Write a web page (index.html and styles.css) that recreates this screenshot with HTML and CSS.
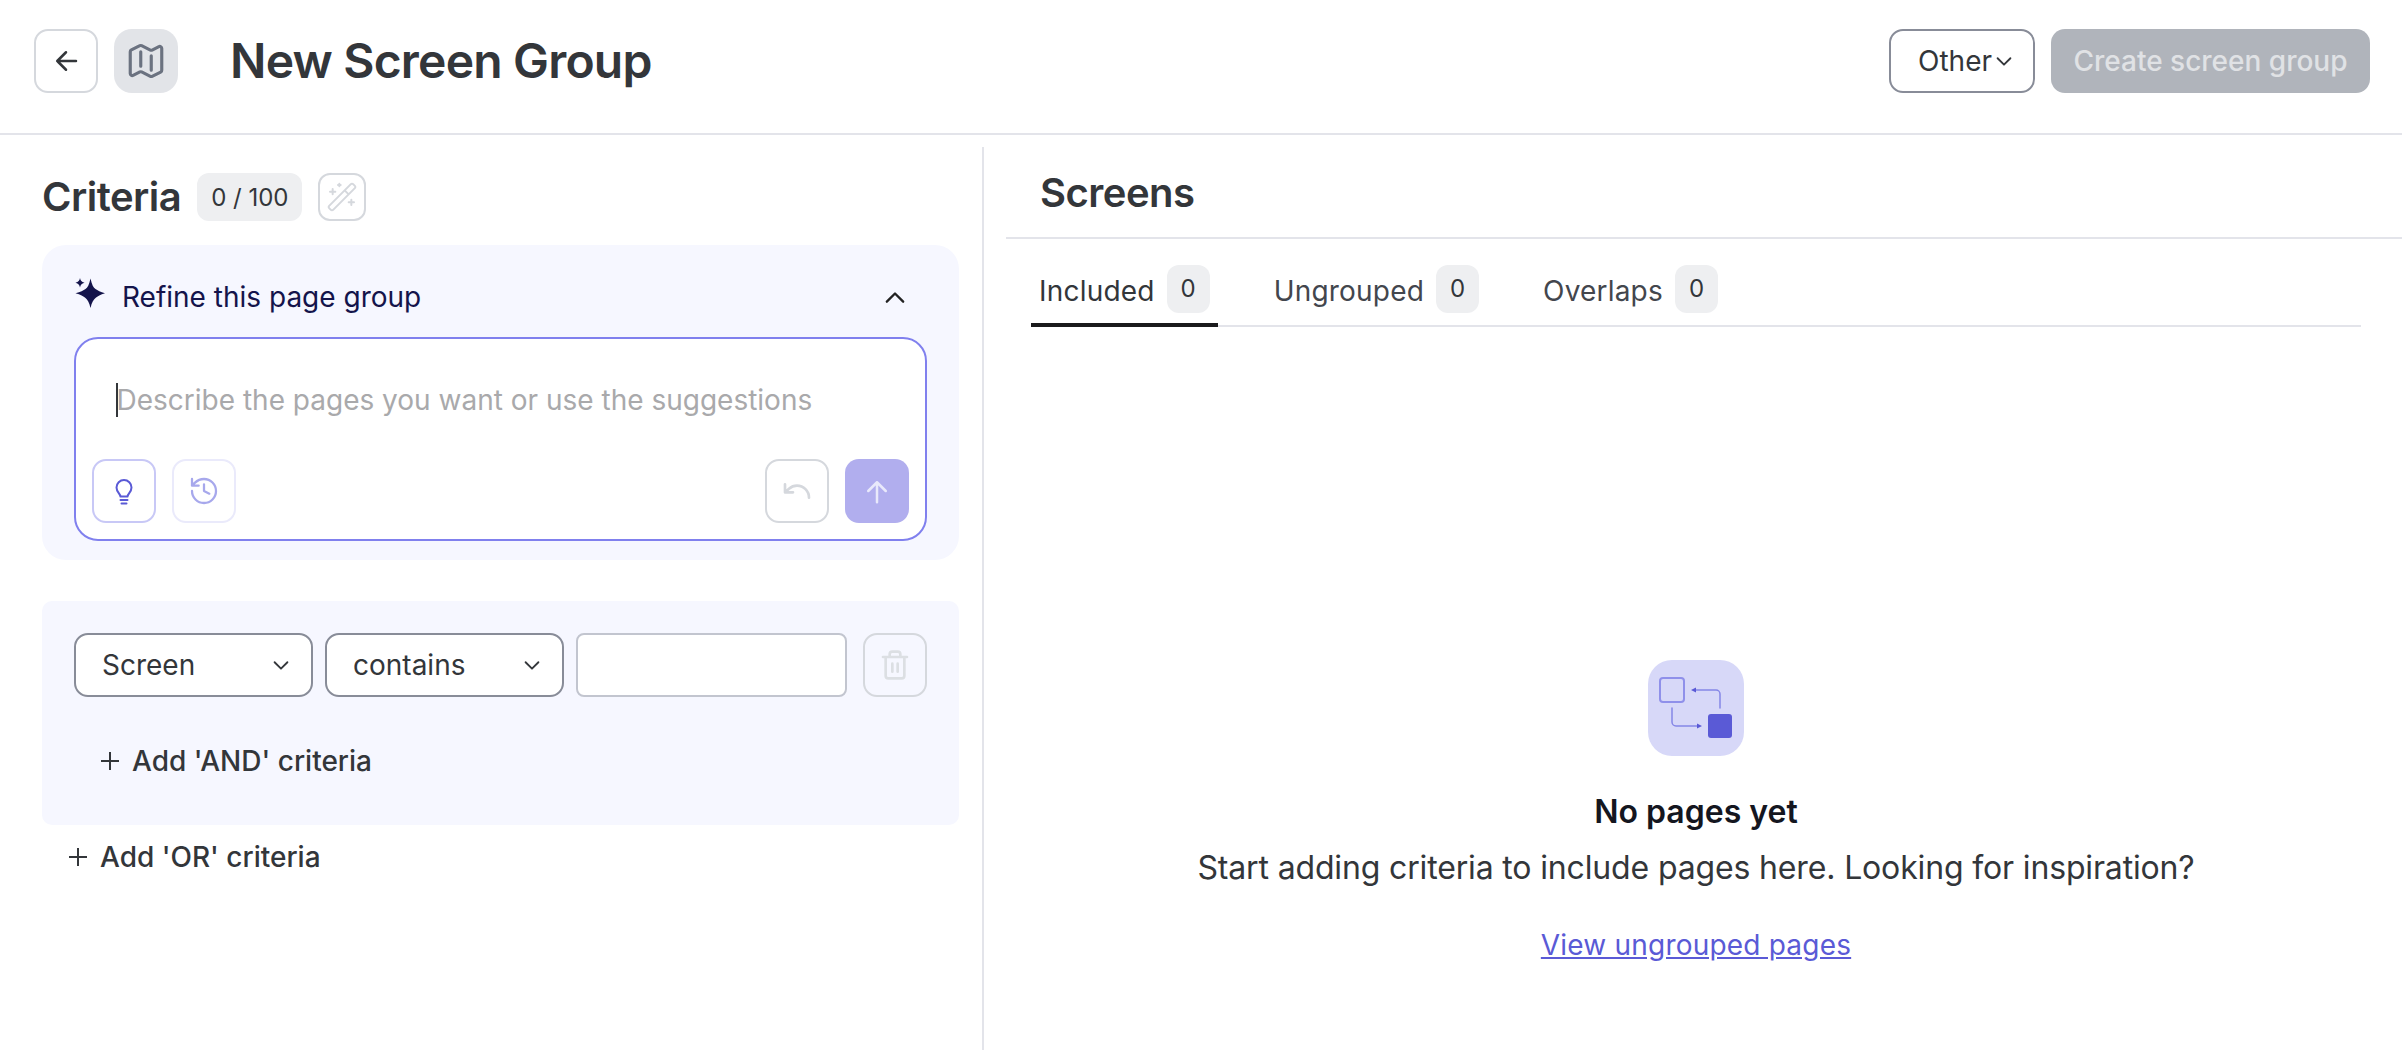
FILE: index.html
```html
<!DOCTYPE html>
<html lang="en">
<head>
    <meta charset="UTF-8">
    <meta name="viewport" content="width=device-width, initial-scale=1.0">
    <title>New Screen Group</title>
    <link rel="stylesheet" href="styles.css">
</head>
<body>
    <header class="topbar">
        <button class="icon-btn back-btn" aria-label="Back">
            <svg width="30" height="30" viewBox="0 0 24 24"><path d="M12 19l-7-7 7-7M5 12h15"/></svg>
        </button>
        <div class="map-badge">
            <svg width="42" height="42" viewBox="0 0 24 24"><path d="M9 6.75V15m6-6v8.25m.503 3.498 4.875-2.437c.381-.19.622-.58.622-1.006V4.82c0-.836-.88-1.38-1.628-1.006l-3.869 1.934c-.317.159-.69.159-1.006 0L9.503 3.252a1.125 1.125 0 0 0-1.006 0L3.622 5.689C3.24 5.88 3 6.27 3 6.695V19.18c0 .836.88 1.38 1.628 1.006l3.869-1.934c.317-.159.69-.159 1.006 0l4.994 2.497c.317.158.69.158 1.006 0Z"/></svg>
        </div>
        <h1 class="page-title">New Screen Group</h1>
        <button class="other-btn">Other
            <svg width="22" height="22" viewBox="0 0 24 24"><path d="M5 9l7 7 7-7"/></svg>
        </button>
        <button class="create-btn">Create screen group</button>
    </header>

    <main class="layout">
        <section class="criteria-col">
            <div class="criteria-head">
                <h2 class="section-title">Criteria</h2>
                <span class="count count-wide">0 / 100</span>
                <button class="wand-btn" aria-label="Generate">
                    <svg width="32" height="32" viewBox="0 0 24 24"><path d="m21.64 3.64-1.28-1.28a1.21 1.21 0 0 0-1.72 0L2.36 18.64a1.21 1.21 0 0 0 0 1.72l1.28 1.28a1.2 1.2 0 0 0 1.72 0L21.64 5.36a1.2 1.2 0 0 0 0-1.72M14 7l3 3M5 6v4M19 14v4M10 2v2M7 8H3M21 16h-4M11 3H9"/></svg>
                </button>
            </div>

            <div class="refine-panel">
                <div class="refine-head">
                    <svg class="sparkle" width="30" height="30" viewBox="0 0 30 30"><path d="M15.500 0.500C16.800 6.500 18.500 10 20.500 11 22.500 12.500 25.500 14 30 15.200 25.500 16.500 22.500 18 20.500 20 18.500 21.500 16.800 24.500 15.500 30 14.200 24.500 12.500 21.500 10.500 20 8.500 18 5.500 16.500 0.500 15.200 5.500 14 8.500 12.500 10.500 11 12.500 10 14.200 6.500 15.500 0.500ZM5 0C5.500 2.800 6.500 3.800 9.500 4.700 6.500 5.600 5.500 6.600 5 9.400 4.500 6.600 3.500 5.600 0.500 4.700 3.500 3.800 4.500 2.800 5 0Z"/></svg>
                    <span class="refine-title">Refine this page group</span>
                    <svg class="chevron-up" width="28" height="28" viewBox="0 0 24 24"><path d="M5 16l7-7 7 7"/></svg>
                </div>
                <div class="prompt-box">
                    <div class="prompt-line"><span class="caret"></span><span class="placeholder">Describe the pages you want or use the suggestions</span></div>
                    <div class="prompt-actions">
                        <button class="tool-btn bulb-btn" aria-label="Suggestions">
                            <svg width="32" height="32" viewBox="0 0 32 32"><path d="M12.500 21.500C12 18.500 8.500 17 8.500 12.500a7.500 7.500 0 0 1 15 0c0 4.500-3.500 6-4 9ZM12.500 25h7M13.500 28.500h5"/></svg>
                        </button>
                        <button class="tool-btn history-btn" aria-label="History">
                            <svg width="32" height="32" viewBox="0 0 24 24"><path d="M3 12a9 9 0 1 0 9-9 9.750 9.750 0 0 0-6.740 2.740L3 8M3 3v5h5M12 7v5l4 2"/></svg>
                        </button>
                        <span class="spacer"></span>
                        <button class="tool-btn undo-btn" aria-label="Undo">
                            <svg width="32" height="32" viewBox="0 0 24 24"><path d="M3 7v6h6M21 17a9 9 0 0 0-9-9 9 9 0 0 0-6 2.300L3 13"/></svg>
                        </button>
                        <button class="tool-btn send-btn" aria-label="Send">
                            <svg width="30" height="30" viewBox="0 0 24 24"><path d="M5 12l7-7 7 7M12 5v16"/></svg>
                        </button>
                    </div>
                </div>
            </div>

            <div class="rule-panel">
                <div class="rule-row">
                    <div class="select">Screen
                        <svg width="22" height="22" viewBox="0 0 24 24"><path d="M5 9l7 7 7-7"/></svg>
                    </div>
                    <div class="select">contains
                        <svg width="22" height="22" viewBox="0 0 24 24"><path d="M5 9l7 7 7-7"/></svg>
                    </div>
                    <div class="value-input"></div>
                    <button class="tool-btn trash-btn" aria-label="Delete">
                        <svg width="32" height="32" viewBox="0 0 24 24"><path d="M3 6h18M19 6v14a2 2 0 0 1-2 2H7a2 2 0 0 1-2-2V6M8 6V4a2 2 0 0 1 2-2h4a2 2 0 0 1 2 2v2M10 11v6M14 11v6"/></svg>
                    </button>
                </div>
                <div class="add-link add-and">
                    <svg width="18" height="18" viewBox="0 0 18 18"><path d="M9 0v18M0 9h18"/></svg>
                    Add 'AND' criteria
                </div>
            </div>
            <div class="add-link add-or">
                <svg width="18" height="18" viewBox="0 0 18 18"><path d="M9 0v18M0 9h18"/></svg>
                Add 'OR' criteria
            </div>
        </section>

        <section class="screens-col">
            <div class="screens-head">
                <h2 class="section-title">Screens</h2>
            </div>
            <div class="tabs">
                <div class="tab tab-active">Included <span class="count">0</span></div>
                <div class="tab">Ungrouped <span class="count">0</span></div>
                <div class="tab">Overlaps <span class="count">0</span></div>
            </div>
            <div class="empty">
                <div class="empty-icon">
                    <svg width="96" height="96" viewBox="0 0 96 96">
                        <rect class="ei-box" x="12" y="18" width="24" height="24" rx="3"/>
                        <rect class="ei-solid" x="60" y="54" width="24" height="24" rx="3"/>
                        <path class="ei-line" d="M72 48V34a4 4 0 0 0-4-4H46M24 48v14a4 4 0 0 0 4 4h23"/>
                        <path class="ei-head" d="M43 30l5-2.500v5ZM54 66l-5-2.500v5Z"/>
                    </svg>
                </div>
                <h3 class="empty-title">No pages yet</h3>
                <p class="empty-text">Start adding criteria to include pages here. Looking for inspiration?</p>
                <a class="empty-link" href="#">View ungrouped pages</a>
            </div>
        </section>
    </main>
</body>
</html>
```

FILE: styles.css
```css
/* Shared colours */
:root {
    --text: #33363a;
    --ink: #14144b;
    --line: #e3e4ea;
    --soft-border: #d5d8dd;
    --panel: #f6f7ff;
    --indigo: #5a5ad6;
    --chip: #eeeff1;
}

* {
    box-sizing: border-box;
}

html, body {
    height: 100%;
}

body {
    margin: 0;
    background: #fff;
    color: var(--text);
    font-family: Inter, "Noto Sans", sans-serif;
    font-size: 28px;
    overflow: hidden;
}

h1, h2, h3, p {
    margin: 0;
}

button {
    font: inherit;
    color: inherit;
    background: none;
    padding: 0;
    cursor: pointer;
}

svg path {
    fill: none;
    stroke: currentColor;
    stroke-width: 2;
    stroke-linecap: round;
    stroke-linejoin: round;
}

/* Top bar */
.topbar {
    display: flex;
    align-items: center;
    height: 135px;
    padding: 0 32px 11px 34px;
    border-bottom: 2px solid var(--line);
}

.icon-btn, .tool-btn {
    display: flex;
    align-items: center;
    justify-content: center;
    width: 64px;
    height: 64px;
    border: 2px solid var(--soft-border);
    border-radius: 14px;
    background: #fff;
    flex: none;
}

.map-badge {
    display: flex;
    align-items: center;
    justify-content: center;
    width: 64px;
    height: 64px;
    margin-left: 16px;
    border-radius: 18px;
    background: #e2e4e8;
    color: #6b7280;
}

.map-badge path {
    stroke-width: 1.800;
}

.page-title {
    margin-left: 52px;
    font-size: 48px;
    font-weight: 600;
    letter-spacing: -0.8px;
    line-height: 64px;
}

.other-btn {
    display: flex;
    align-items: center;
    justify-content: space-between;
    width: 146px;
    height: 64px;
    margin-left: auto;
    padding: 0 18px 0 27px;
    border: 2px solid #888c98;
    border-radius: 14px;
    background: #fff;
}

.create-btn {
    width: 319px;
    height: 64px;
    margin-left: 16px;
    border: 0;
    border-radius: 14px;
    background: #b0b4bb;
    color: #e0e2e5;
    font-weight: 500;
}

/* Page columns */
.layout {
    display: flex;
    height: 915px;
}

.criteria-col {
    width: 984px;
    flex: none;
    margin-top: 12px;
    padding: 26px 23px 0 42px;
    border-right: 2px solid var(--line);
}

.criteria-head {
    display: flex;
    align-items: center;
    height: 48px;
}

.section-title {
    font-size: 40px;
    font-weight: 600;
    letter-spacing: -0.5px;
    line-height: 48px;
}

.count {
    display: inline-flex;
    align-items: center;
    justify-content: center;
    width: 43px;
    height: 48px;
    margin-left: 12px;
    border-radius: 12px;
    background: var(--chip);
    font-size: 24px;
    font-weight: 400;
    letter-spacing: 0;
}

.count-wide {
    width: 105px;
    margin-left: 16px;
}

.wand-btn {
    display: flex;
    align-items: center;
    justify-content: center;
    width: 48px;
    height: 48px;
    margin-left: 16px;
    border: 2px solid var(--soft-border);
    border-radius: 12px;
    color: #d5d8dd;
}

.wand-btn path {
    stroke-width: 1.500;
}

/* Refine panel */
.refine-panel {
    margin-top: 24px;
    padding: 0 32px 19px;
    border-radius: 24px;
    background: var(--panel);
}

.refine-head {
    display: flex;
    align-items: center;
    height: 92px;
    padding: 12px 0 0 1px;
    color: var(--ink);
}

.sparkle {
    flex: none;
    margin-top: -8px;
}

.sparkle path {
    fill: currentColor;
    stroke: none;
}

.refine-title {
    margin-left: 17px;
    line-height: 36px;
}

.chevron-up {
    margin-left: auto;
    margin-right: 18px;
    color: #222;
}

.prompt-box {
    height: 204px;
    padding: 44px 16px 16px;
    border: 2px solid #8080ee;
    border-radius: 24px;
    background: #fff;
}

.prompt-line {
    display: flex;
    align-items: center;
    height: 34px;
    margin-left: 24px;
}

.caret {
    width: 2px;
    height: 34px;
    background: var(--text);
    flex: none;
}

.placeholder {
    margin-left: -1.500px;
    color: #a9a9ab;
}

.prompt-actions {
    display: flex;
    gap: 16px;
    margin-top: 42px;
}

.spacer {
    flex: 1;
}

.bulb-btn {
    border-color: #c8c8f6;
    color: var(--indigo);
}

.history-btn {
    border-color: #eaeafb;
    color: #a7a8ec;
}

.history-btn path {
    stroke-width: 1.700;
}

.undo-btn {
    color: #d5d8dd;
}

.send-btn {
    border: 0;
    background: #b1aeee;
    color: #e9e9fb;
}

/* Rule panel */
.rule-panel {
    height: 224px;
    margin-top: 41px;
    padding: 32px 32px 0;
    border-radius: 10px;
    background: var(--panel);
}

.rule-row {
    display: flex;
    gap: 12px;
}

.select {
    display: flex;
    align-items: center;
    justify-content: space-between;
    width: 239px;
    height: 64px;
    padding: 0 19px 0 26px;
    border: 2px solid #888c98;
    border-radius: 14px;
    background: #fff;
    flex: none;
}

.value-input {
    width: 271px;
    height: 64px;
    border: 2px solid #c2c5cf;
    border-radius: 8px;
    background: #fff;
    flex: none;
}

.trash-btn {
    margin-left: 4px;
    background: none;
    color: #dcdfe3;
}

.add-link {
    display: flex;
    align-items: center;
    gap: 13px;
    font-weight: 500;
    line-height: 36px;
}

.add-link svg {
    flex: none;
}

.add-and {
    margin: 46px 0 0 27px;
}

.add-or {
    margin: 14px 0 0 27px;
}

/* Screens column */
.screens-col {
    flex: 1;
    min-width: 0;
    margin-top: 12px;
}

.screens-head {
    height: 92px;
    margin-left: 22px;
    padding: 22px 0 0 34px;
    border-bottom: 2px solid var(--line);
}

.tabs {
    display: flex;
    gap: 48px;
    height: 88px;
    margin: 0 41px 0 47px;
    padding-top: 26px;
    border-bottom: 2px solid var(--line);
}

.tab {
    display: flex;
    align-items: flex-start;
    height: 62px;
    padding: 2px 8px 0;
    color: #43464d;
    letter-spacing: 0.2px;
    line-height: 48px;
}

.tab .count {
    margin-top: -2px;
    color: var(--text);
}

.tab-active {
    border-bottom: 4px solid #1a1a1c;
    color: var(--text);
}

/* Empty state */
.empty {
    display: flex;
    flex-direction: column;
    align-items: center;
    margin: 0 41px 0 47px;
    padding-top: 333px;
}

.empty-icon {
    width: 96px;
    height: 96px;
    border-radius: 24px;
    background: #d7d8f8;
}

.empty-icon svg {
    display: block;
}

.ei-box {
    fill: none;
    stroke: #8f90ea;
    stroke-width: 2;
}

.ei-solid {
    fill: var(--indigo);
}

.empty-icon .ei-line {
    stroke: #8586e6;
    stroke-width: 1.500;
}

.empty-icon .ei-head {
    fill: var(--indigo);
    stroke: none;
}

.empty-title {
    margin-top: 36px;
    color: #14161f;
    font-size: 32px;
    font-weight: 600;
    line-height: 40px;
}

.empty-text {
    margin-top: 16px;
    font-size: 32px;
    letter-spacing: -0.15px;
    line-height: 40px;
}

.empty-link {
    margin-top: 39px;
    color: var(--indigo);
    font-size: 28px;
    letter-spacing: 0.2px;
    line-height: 36px;
    text-decoration: underline;
}
```
